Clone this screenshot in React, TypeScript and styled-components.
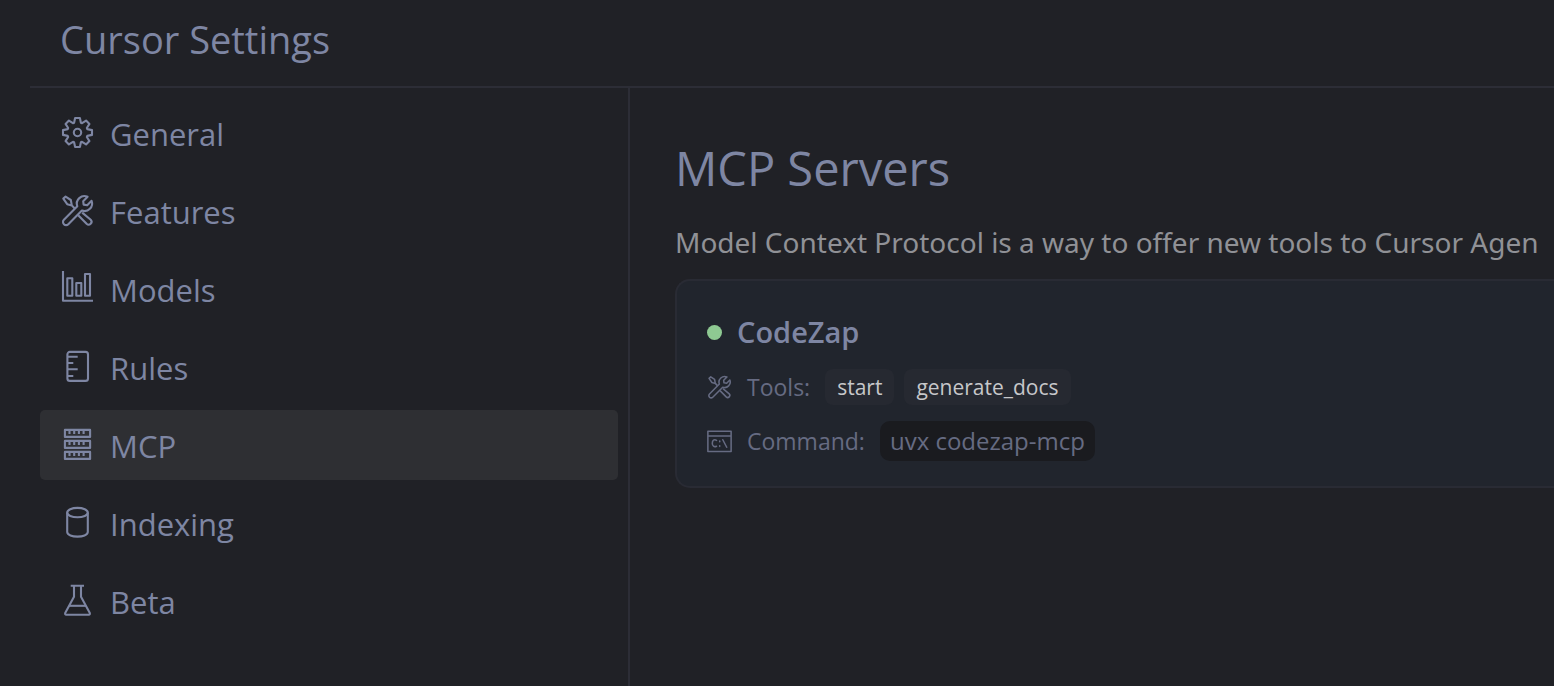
import React from "react";
import styled, { createGlobalStyle } from "styled-components";

const GlobalStyle = createGlobalStyle`
  * { box-sizing: border-box; }
  html, body { margin: 0; background: #202126; }
  body { font-family: "Open Sans", "Noto Sans", sans-serif; color: #7e86a3; overflow: hidden; }
  button { font: inherit; color: inherit; }
`;

const Page = styled.div`
  display: flex;
  flex-direction: column;
  min-height: 100vh;
  padding-left: 30px;
`;

const Header = styled.header`
  padding: 12px 30px 20px;
  border-bottom: 2px solid #2c2d36;
`;

const PageTitle = styled.h1`
  margin: 0;
  font-size: 38px;
  line-height: 54px;
  font-weight: 400;
`;

const Body = styled.div`
  flex: 1;
  display: grid;
  grid-template-columns: 600px minmax(0, 1fr);
`;

const Sidebar = styled.nav`
  display: flex;
  flex-direction: column;
  gap: 8px;
  padding: 10px;
  border-right: 2px solid #2c2d36;
`;

const NavButton = styled.button<{ $active: boolean }>`
  display: flex;
  align-items: center;
  gap: 14px;
  height: 70px;
  padding: 0 20px;
  border: 0;
  border-radius: 5px;
  background: ${(p) => (p.$active ? "#2e2f33" : "transparent")};
  font-size: 31px;
  line-height: 44px;
  text-align: left;
  cursor: pointer;
`;

const NavLabel = styled.span`
  padding-top: 2px;
`;

const Icon = styled.svg<{ $size: number }>`
  flex: none;
  width: ${(p) => p.$size}px;
  height: ${(p) => p.$size}px;
  fill: none;
  stroke: currentColor;
  stroke-width: 2.1;
  stroke-linejoin: round;
`;

const Main = styled.main`
  padding: 48px 0 0 45px;
  overflow: hidden;
`;

const SectionTitle = styled.h2`
  margin: 0;
  font-size: 47px;
  line-height: 64px;
  font-weight: 400;
`;

const Description = styled.p`
  margin: 20px 0 15px;
  font-family: "Noto Sans", "Open Sans", sans-serif;
  font-size: 28px;
  line-height: 44px;
  color: #909196;
  white-space: nowrap;
`;

const Card = styled.article`
  padding: 30px 0 25px 30px;
  border: 2px solid #292b34;
  border-right: 0;
  border-radius: 15px 0 0 15px;
  background: #21252d;
`;

const CardHeader = styled.div`
  display: flex;
  align-items: center;
  gap: 15px;
  margin-bottom: 16px;
`;

const StatusDot = styled.span`
  width: 15px;
  height: 15px;
  border-radius: 50%;
  background: #8ec992;
`;

const ServerName = styled.h3`
  margin: 0;
  font-size: 29px;
  line-height: 42px;
  font-weight: 600;
`;

const Row = styled.div`
  display: flex;
  align-items: center;
  gap: 15px;
  color: #666b82;
  font-size: 23px;
  line-height: 36px;

  & + & { margin-top: 16px; }
`;

const Tags = styled.div`
  display: flex;
  gap: 10px;
`;

const Tag = styled.span`
  padding: 0 12px;
  border-radius: 8px;
  background: #262931;
  color: #c6c7ca;
  font-size: 21px;
  line-height: 36px;
`;

const Command = styled.code`
  padding: 0 10px;
  border-radius: 10px;
  background: #1a1b1f;
  font-family: inherit;
  font-size: 24px;
  line-height: 40px;
`;

const gearPoints = Array.from({ length: 8 }, (_, i) => {
  const a = (i * Math.PI) / 4;
  return [[-3.4, -9.8], [-2.4, -14.5], [2.4, -14.5], [3.4, -9.8]]
    .map(([x, y]) =>
      `${(15.5 + x * Math.cos(a) - y * Math.sin(a)).toFixed(2)},${(15.5 + x * Math.sin(a) + y * Math.cos(a)).toFixed(2)}`)
    .join(" ");
}).join(" ");

const toolsShape = (
  <>
    <path d="M1.3 3.6 3.6 1.6 8.8 5 9.8 10.4 5.2 9.2Z M9.8 10.4 13 13.8" />
    <path d="M25.6 1.8A7.6 7.6 0 0 0 15.3 11.3L1.9 24.8A3.1 3.1 0 0 0 6.3 29.2L19.9 15.6A7.6 7.6 0 0 0 29.6 5.8L25.2 10.2 21.6 9.6 21.2 6.2Z" />
    <path d="M16.2 20.2 24.6 28.8A2.9 2.9 0 0 0 28.7 24.7L20.2 17.6" />
  </>
);

const shapes = {
  gear: (
    <>
      <polygon points={gearPoints} />
      <circle cx="15.5" cy="15.5" r="3.7" />
    </>
  ),
  tools: toolsShape,
  chart: (
    <>
      <path d="M1-2V27.7H31" />
      <rect x="5.3" y="5.2" width="5" height="17.6" />
      <rect x="14.3" y="10" width="5" height="12.8" />
      <rect x="23" y="1" width="5" height="21.8" />
    </>
  ),
  ruler: (
    <>
      <rect x="5.4" y="0.9" width="20.6" height="29" rx="2.5" />
      <path d="M5.4 5.8H15.7M5.4 12H11.3M5.4 18.3H15.7M5.4 25H11.3" />
    </>
  ),
  server: (
    <>
      <path d="M2.9.9H28.1V7.9H2.9ZM2.9 11.9H28.1V18.9H2.9ZM2.9 22.9H28.1V29.9H2.9Z" />
      <path d="M7.5 1V5M12.2 1V5M16.9 1V5M21.6 1V5M7.5 12V16M12.2 12V16M16.9 12V16M21.6 12V16M7.5 23V27M12.2 23V27M16.9 23V27M21.6 23V27" />
    </>
  ),
  database: (
    <>
      <ellipse cx="15.5" cy="5.6" rx="10.3" ry="4.7" />
      <path d="M5.2 5.6V25C5.2 31.2 25.8 31.2 25.8 25V5.6" />
    </>
  ),
  flask: (
    <>
      <path d="M8.7.8H22M12 .8V11.7L3.2 28Q2.8 29.8 4.2 29.8H26.8Q28.2 29.8 27.8 28L19 11.7V.8" />
      <path d="M7 20.8H24" />
    </>
  ),
};

type ShapeName = keyof typeof shapes;

const navItems: { label: string; icon: ShapeName }[] = [
  { label: "General", icon: "gear" },
  { label: "Features", icon: "tools" },
  { label: "Models", icon: "chart" },
  { label: "Rules", icon: "ruler" },
  { label: "MCP", icon: "server" },
  { label: "Indexing", icon: "database" },
  { label: "Beta", icon: "flask" },
];

export default function App() {
  const [active, setActive] = React.useState("MCP");
  return (
    <>
      <GlobalStyle />
      <Page>
        <Header>
          <PageTitle>Cursor Settings</PageTitle>
        </Header>
        <Body>
          <Sidebar aria-label="Settings sections">
            {navItems.map(({ label, icon }) => (
              <NavButton
                key={label}
                type="button"
                $active={label === active}
                aria-current={label === active ? "page" : undefined}
                onClick={() => setActive(label)}
              >
                <Icon $size={36} viewBox="-2 -2 36 36" aria-hidden="true">{shapes[icon]}</Icon>
                <NavLabel>{label}</NavLabel>
              </NavButton>
            ))}
          </Sidebar>
          <Main>
            <SectionTitle>MCP Servers</SectionTitle>
            <Description>Model Context Protocol is a way to offer new tools to Cursor Agen</Description>
            <Card>
              <CardHeader>
                <StatusDot />
                <ServerName>CodeZap</ServerName>
              </CardHeader>
              <Row>
                <Icon $size={25} viewBox="-1.5 -1 34 34" aria-hidden="true">{toolsShape}</Icon>
                <span>Tools:</span>
                <Tags>
                  <Tag>start</Tag>
                  <Tag>generate_docs</Tag>
                </Tags>
              </Row>
              <Row>
                <Icon $size={25} viewBox="0 0 34 34" aria-hidden="true">
                  <path d="M1.2 3H32.8V30.7H1.2ZM1.2 9.4H32.8" />
                  <path
                    strokeLinecap="round"
                    d="M13 15.4C9.6 13.4 7.2 15.6 7.2 19.4S9.6 25 13 23.4M17.3 16.4V17.2M17.3 22.8V23.6M21.5 14.6 26.8 24.8"
                  />
                </Icon>
                <span>Command:</span>
                <Command>uvx codezap-mcp</Command>
              </Row>
            </Card>
          </Main>
        </Body>
      </Page>
    </>
  );
}
